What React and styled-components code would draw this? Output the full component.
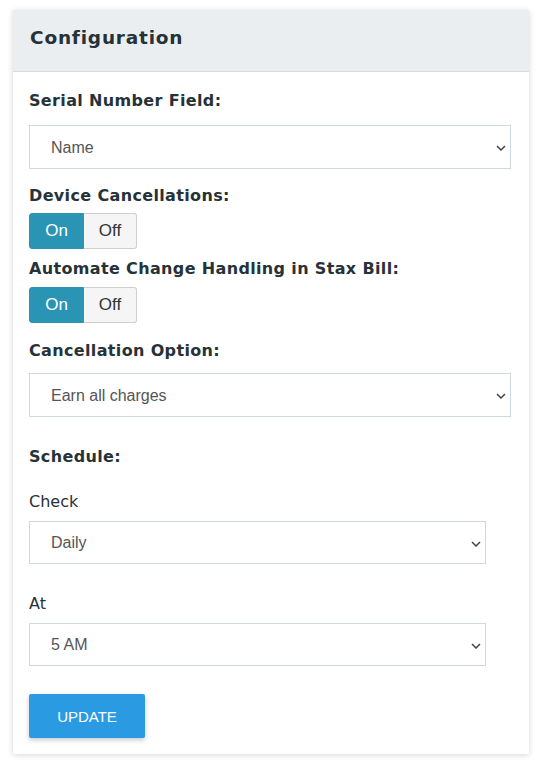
import React from "react";
import styled, { createGlobalStyle } from "styled-components";

const Global = createGlobalStyle`
  html, body { margin: 0; padding: 0; background: #ffffff; }
  body { font-family: "DejaVu Sans", Verdana, sans-serif; color: #263238; }
  * { box-sizing: border-box; }
`;

const Page = styled.div`
  padding: 10px 16px 10px 13px;
`;

const Card = styled.section`
  width: 516px;
  background: #ffffff;
  box-shadow: 0 1px 6px rgba(0, 0, 0, 0.16);
`;

const Header = styled.header`
  height: 62px;
  background: #eaeef1;
  border-bottom: 1px solid #d3dde3;
  display: flex;
  align-items: center;
  padding: 0 17px;
`;

const Title = styled.h2`
  margin: 0;
  font-family: "DejaVu Sans", Verdana, sans-serif;
  font-weight: bold;
  font-size: 18.5px;
  letter-spacing: 0.8px;
  color: #263238;
  line-height: 24px;
  padding-bottom: 5px;
`;

const Body = styled.div`
  display: flex;
  flex-direction: column;
  padding: 17px 18px 16px 16px;
`;

const Label = styled.div`
  font-family: "DejaVu Sans", Verdana, sans-serif;
  font-weight: ${(p) => (p.$plain ? "normal" : "bold")};
  font-size: 16px;
  letter-spacing: ${(p) => (p.$plain ? 0 : 0.35)}px;
  line-height: 24px;
  color: #263238;
  margin-top: ${(p) => p.$mt || 0}px;
`;

const SelectWrap = styled.div`
  position: relative;
  width: ${(p) => p.$w}px;
  height: ${(p) => p.$h || 44}px;
  margin-top: ${(p) => p.$mt || 0}px;
`;

const Select = styled.select`
  appearance: none;
  -webkit-appearance: none;
  width: 100%;
  height: 100%;
  border: 1px solid #ced8de;
  border-radius: 0;
  background: #ffffff;
  font-family: "Liberation Sans", Arial, sans-serif;
  font-size: 16px;
  color: #555555;
  padding: 0 30px 0 21px;
  outline: none;
`;

const Chevron = styled.svg`
  position: absolute;
  right: 5px;
  top: 50%;
  width: 10px;
  height: 6px;
  margin-top: -2px;
  pointer-events: none;
`;

const Toggle = styled.div`
  display: flex;
  width: 108px;
  height: 36px;
  margin-top: ${(p) => p.$mt || 0}px;
`;

const ToggleBtn = styled.button`
  flex: 0 0 ${(p) => p.$w}px;
  height: 100%;
  font-family: "Liberation Sans", Arial, sans-serif;
  font-size: 17px;
  padding: 0;
  cursor: pointer;
  color: ${(p) => (p.$active ? "#ffffff" : "#333333")};
  background: ${(p) => (p.$active ? "#2a94b4" : "#f5f5f5")};
  border: 1px solid ${(p) => (p.$active ? "#2a94b4" : "#cfcfcf")};
  border-left-width: ${(p) => (p.$active ? 1 : 0)}px;
  border-radius: ${(p) => (p.$active ? "3px 0 0 3px" : "0 3px 3px 0")};
`;

const UpdateButton = styled.button`
  width: 116px;
  height: 44px;
  margin-top: 28px;
  background: #2a9ae3;
  color: #ffffff;
  border: none;
  border-radius: 2px;
  box-shadow: 0 2px 5px rgba(0, 0, 0, 0.22);
  font-family: "Liberation Sans", Arial, sans-serif;
  font-size: 15px;
  cursor: pointer;
  align-self: flex-start;
`;

function Dropdown({ value, width, height, mt }) {
  return (
    <SelectWrap $w={width} $h={height} $mt={mt}>
      <Select defaultValue={value}>
        <option>{value}</option>
      </Select>
      <Chevron viewBox="0 0 10 6">
        <path d="M1 1 L5 5 L9 1" fill="none" stroke="#444" strokeWidth="1.5" />
      </Chevron>
    </SelectWrap>
  );
}

function OnOff({ mt }) {
  return (
    <Toggle $mt={mt}>
      <ToggleBtn $active $w={55}>On</ToggleBtn>
      <ToggleBtn $w={53}>Off</ToggleBtn>
    </Toggle>
  );
}

export default function App() {
  return (
    <Page>
      <Global />
      <Card>
        <Header>
          <Title>Configuration</Title>
        </Header>
        <Body>
          <Label>Serial Number Field:</Label>
          <Dropdown value="Name" width={482} mt={12} />
          <Label $mt={15}>Device Cancellations:</Label>
          <OnOff mt={5} />
          <Label $mt={8}>Automate Change Handling in Stax Bill:</Label>
          <OnOff mt={6} />
          <Label $mt={16}>Cancellation Option:</Label>
          <Dropdown value="Earn all charges" width={482} mt={10} />
          <Label $mt={28}>Schedule:</Label>
          <Label $plain $mt={21}>Check</Label>
          <Dropdown value="Daily" width={457} height={43} mt={7} />
          <Label $plain $mt={28}>At</Label>
          <Dropdown value="5 AM" width={457} height={43} mt={7} />
          <UpdateButton>UPDATE</UpdateButton>
        </Body>
      </Card>
    </Page>
  );
}
